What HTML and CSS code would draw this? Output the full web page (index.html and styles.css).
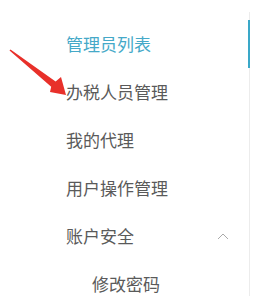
FILE: index.html
```html
<!DOCTYPE html>
<html>
<head>
<meta charset="utf-8">
<link rel="stylesheet" href="styles.css">
</head>
<body>
<div class="page">
  <nav class="menu">
    <div class="item active">管理员列表</div>
    <div class="item">办税人员管理</div>
    <div class="item">我的代理</div>
    <div class="item">用户操作管理</div>
    <div class="item group">
      <span>账户安全</span>
      <svg class="chev" width="12" height="7" viewBox="0 0 12 7"><polyline points="1,6 6,1 11,6" fill="none" stroke="#aaa" stroke-width="1"/></svg>
    </div>
    <div class="item sub">修改密码</div>
  </nav>
  <svg class="arrow" width="80" height="110" viewBox="0 0 80 110">
    <polygon points="9.5,50.5 51.2,86.8 50,92 66,95 61,77 55.6,81.6 10.5,49.5" fill="#e8302a"/>
  </svg>
</div>
</body>
</html>
```

FILE: styles.css
```css
html, body {
  margin: 0;
  padding: 0;
  background: #fff;
}
.page {
  position: relative;
  width: 270px;
  height: 296px;
  overflow: hidden;
}
.menu {
  width: 249px;
  margin-top: 12px;
  padding-top: 8px;
  height: 276px;
  border-right: 1px solid #ececec;
  font-family: "Noto Sans CJK SC", "Noto Sans", sans-serif;
  font-size: 17px;
  color: #5a5a5a;
}
.item {
  height: 48px;
  line-height: 48px;
  padding-left: 66px;
  box-sizing: border-box;
  white-space: nowrap;
}
.item.active {
  color: #45a9c8;
  margin-right: -1px;
  border-right: 2px solid #3aa8c8;
}
.item.group {
  display: flex;
  align-items: center;
  justify-content: space-between;
  padding-right: 20px;
}
.chev {
  display: block;
}
.item.sub {
  padding-left: 92px;
}
.arrow {
  position: absolute;
  left: 0;
  top: 0;
}
```
